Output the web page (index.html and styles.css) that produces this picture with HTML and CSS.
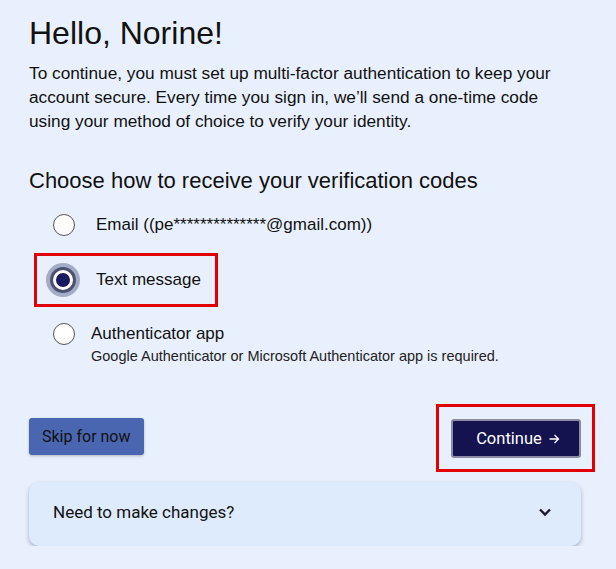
FILE: index.html
```html
<!DOCTYPE html>
<html lang="en">
<head>
    <meta charset="UTF-8">
    <title>Set up verification</title>
    <link rel="stylesheet" href="styles.css">
</head>
<body>
    <div class="container">
        <h1>Hello, Norine!</h1>
        <p class="intro">To continue, you must set up multi-factor authentication to keep your account secure. Every time you sign in, we’ll send a one-time code using your method of choice to verify your identity.</p>

        <h2>Choose how to receive your verification codes</h2>
        <div class="options">
            <label class="option">
                <span class="radio"></span>
                <span class="option-text">Email ((pe**************@gmail.com))</span>
            </label>
            <label class="option option-marked">
                <span class="radio radio-checked"></span>
                <span class="option-text">Text message</span>
            </label>
            <label class="option option-app">
                <span class="radio"></span>
                <span class="option-text">
                    Authenticator app
                    <small>Google Authenticator or Microsoft Authenticator app is required.</small>
                </span>
            </label>
        </div>

        <div class="actions">
            <button type="button" class="btn-skip">Skip for now</button>
            <button type="button" class="btn-continue">Continue
                <svg class="arrow" width="11" height="10" viewBox="0 0 11 10"><path d="M0.5 5 H9.5 M5.5 1 L9.5 5 L5.5 9" fill="none" stroke="#fff" stroke-width="1.3"/></svg>
            </button>
        </div>

        <div class="accordion">
            <span>Need to make changes?</span>
            <svg width="14" height="10" viewBox="0 0 14 10"><path d="M2 2.5 L7 7.5 L12 2.5" fill="none" stroke="#1b1b2e" stroke-width="2.4"/></svg>
        </div>
    </div>
</body>
</html>
```

FILE: styles.css
```css
body {
    font-family: "Liberation Sans", Arial, sans-serif;
    background-color: #e9f0fd;
    color: #111;
    margin: 0;
    padding: 0;
}
.container {
    width: 552px;
    padding: 14px 0 0 29px;
}
h1 {
    font-size: 32px;
    font-weight: normal;
    margin: 0;
    line-height: 38px;
}
.intro {
    font-size: 17.25px;
    line-height: 24px;
    margin: 9px 0 0;
    max-width: 540px;
}
h2 {
    font-size: 22px;
    font-weight: normal;
    margin: 34px 0 0;
    line-height: 28px;
}
.options {
    margin-top: 2px;
}
.option {
    display: flex;
    align-items: center;
    gap: 21px;
    font-size: 17px;
    padding-left: 24px;
    height: 56px;
}
.option-marked {
    width: 184px;
    height: 54px;
    margin-left: 5px;
    padding-left: 15px;
    gap: 23px;
    border: 3px solid #e40000;
    box-sizing: border-box;
}
.option-app {
    align-items: flex-start;
    gap: 16px;
    margin-top: 17px;
    height: auto;
    line-height: 20px;
}
.option-app .radio {
    margin-top: -1px;
}
.option-text small {
    display: block;
    font-size: 14.5px;
    line-height: 17px;
    color: #222;
    margin-top: 4px;
}
.radio {
    width: 20px;
    height: 20px;
    border: 1.5px solid #555;
    border-radius: 50%;
    background-color: #fff;
    flex: none;
}
.radio-checked {
    width: 14px;
    height: 14px;
    background-color: #1a1a5e;
    border: 3px solid #fff;
    box-shadow: 0 0 0 3px #4a5270, 0 0 0 7px #a3abc6;
    margin-left: 1px;
}
.actions {
    display: flex;
    justify-content: space-between;
    align-items: flex-start;
    margin-top: 53px;
}
button {
    font-family: Roboto, "Liberation Sans", sans-serif;
    font-size: 16px;
    border-radius: 3px;
    cursor: pointer;
}
.btn-skip {
    background-color: #4a66b0;
    color: #111;
    border: none;
    height: 37px;
    padding: 0 13px;
    box-shadow: 0 1px 3px rgba(0, 0, 0, 0.25);
}
.btn-continue {
    position: relative;
    background-color: #15134f;
    color: #fff;
    border: 2px solid #8b8ca3;
    height: 39px;
    width: 130px;
    margin-top: 1px;
    font-size: 16.5px;
    padding: 0 0 0 4px;
}
.btn-continue::after {
    content: "";
    position: absolute;
    left: -17px;
    top: -17px;
    right: -16px;
    bottom: -16px;
    border: 3px solid #e40000;
}
.arrow {
    margin-left: 3px;
    vertical-align: 0;
}
.accordion {
    display: flex;
    justify-content: space-between;
    align-items: center;
    margin-top: 24px;
    height: 64px;
    padding: 0 29px 5px 24px;
    background-color: #deebfd;
    border-radius: 10px;
    box-shadow: 0 2px 4px rgba(40, 50, 80, 0.35);
    font-family: Roboto, "Liberation Sans", sans-serif;
    font-size: 17px;
    box-sizing: border-box;
}
```
